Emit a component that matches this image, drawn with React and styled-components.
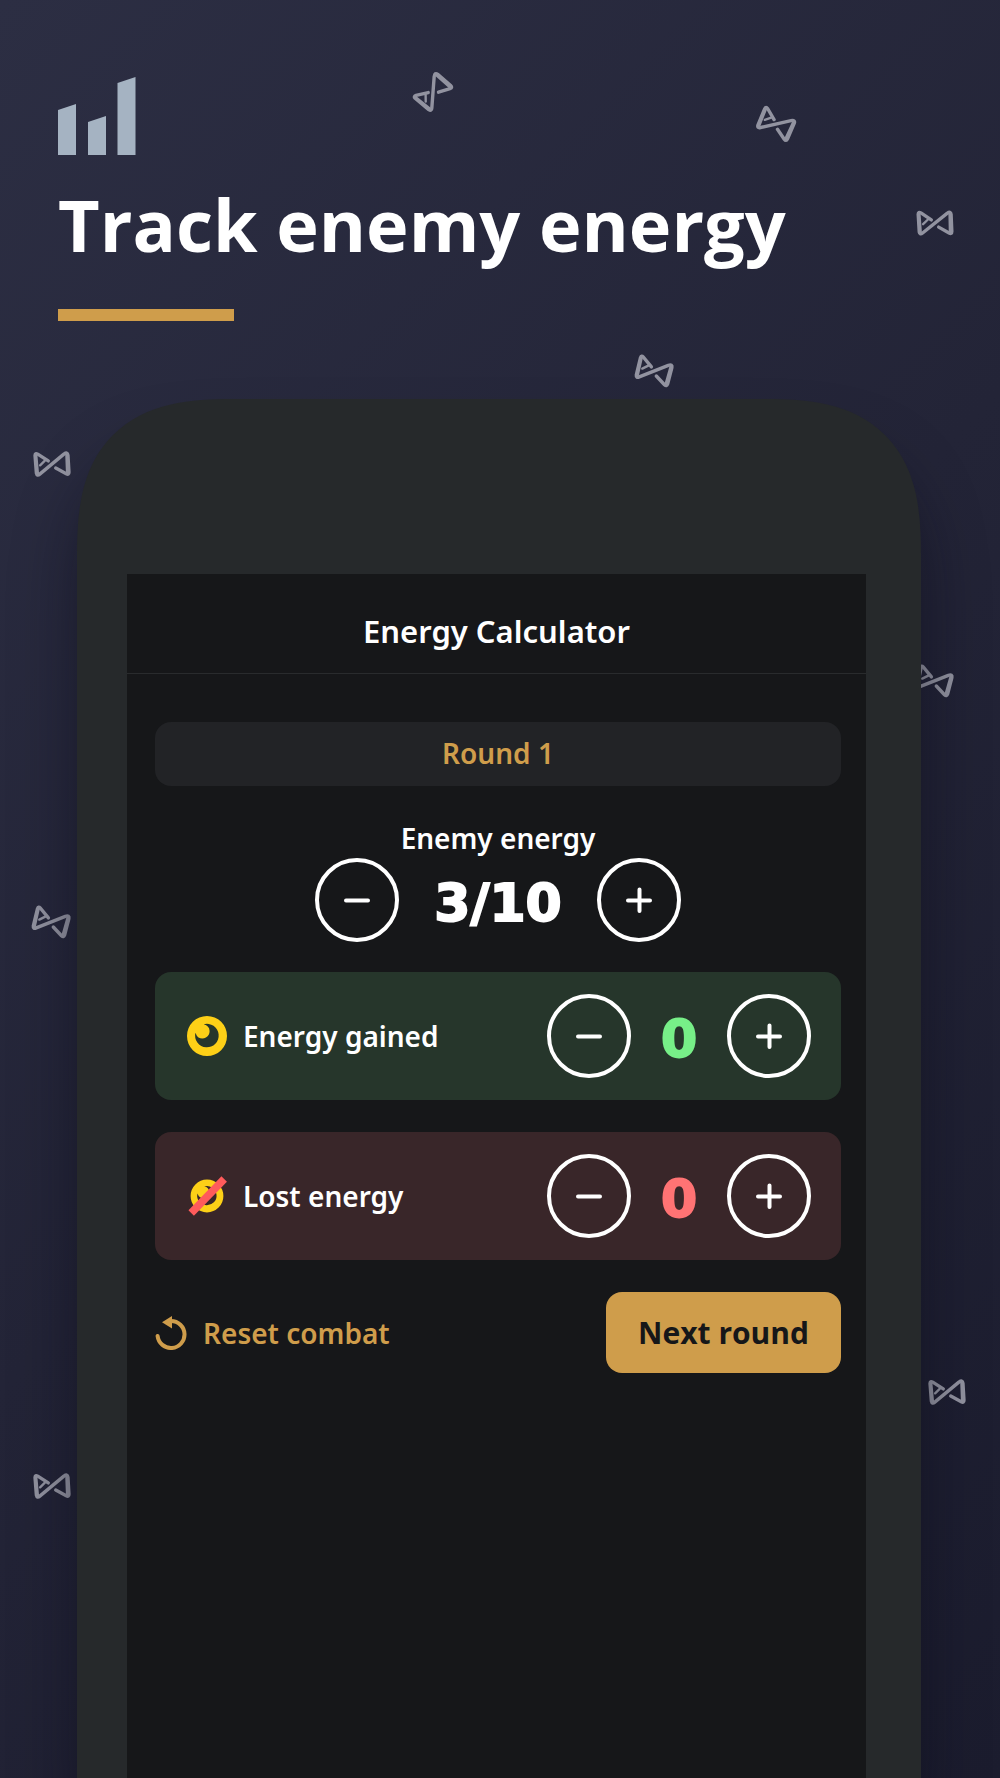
import { useState } from 'react'
import styled, { createGlobalStyle } from 'styled-components'

const GlobalStyle = createGlobalStyle`
  * {
    box-sizing: border-box;
  }

  body {
    margin: 0;
    background-color: #232438;
  }

  button {
    margin: 0;
    padding: 0;
    border: none;
    background: none;
    cursor: pointer;
  }
`

const Page = styled.div`
  position: relative;
  display: flex;
  flex-direction: column;
  min-height: 100vh;
  overflow: hidden;
  color: white;
  font-family: 'Open Sans', sans-serif;
  background: linear-gradient(135deg, #2c2e43 0%, #232437 50%, #1b1c2e 100%);
`

const Intro = styled.header`
  position: relative;
  display: flex;
  flex-direction: column;
  align-items: flex-start;
  padding: 77px 58px 78px;
`

const Title = styled.h1`
  margin: 20px 0 36px;
  font-size: 72px;
  line-height: 98px;
  font-weight: 700;
`

const Underline = styled.div`
  width: 176px;
  height: 12px;
  background-color: #cf9d4b;
`

const Mark = styled.svg`
  position: absolute;
  left: ${(props) => props.$left}%;
  top: ${(props) => props.$top}px;
  width: 38px;
  height: 28px;
  transform: rotate(${(props) => props.$turn}deg);
  overflow: visible;
  fill: none;
  stroke: #9293a0;
  stroke-linecap: round;
  stroke-linejoin: round;
`

const Phone = styled.main`
  position: relative;
  display: flex;
  flex: 1;
  margin: 0 79px 0 77px;
  padding: 175px 55px 0 50px;
  border-radius: 134px 134px 0 0;
  background-color: #26292b;
  box-shadow: 0 50px 60px rgba(10, 10, 24, 0.5);

  @supports (corner-shape: superellipse(1.4)) {
    border-radius: 156px 156px 0 0;
    corner-shape: superellipse(1.4);
  }
`

const Screen = styled.section`
  flex: 1;
  min-width: 0;
  font-family: 'Noto Sans', sans-serif;
  font-size: 28px;
  font-weight: 600;
  background-color: #161719;
`

const ScreenTitle = styled.h2`
  margin: 0;
  padding: 37px 0 22px;
  border-bottom: 1px solid #292b2d;
  font-size: 31px;
  line-height: 40px;
  font-weight: 600;
  text-align: center;
`

const Content = styled.div`
  padding: 48px 25px 48px 28px;
`

const Round = styled.div`
  margin-bottom: 32px;
  padding: 11px 12px 13px;
  border-radius: 16px;
  line-height: 40px;
  text-align: center;
  color: #cf9d4b;
  background-color: #222326;
`

const Meter = styled.div`
  display: flex;
  flex-direction: column;
  align-items: center;
  margin-bottom: 30px;
  line-height: 40px;
`

const Row = styled.div`
  display: flex;
  align-items: center;
  gap: 16px;
  margin-bottom: 32px;
  padding: 22px 30px 22px 32px;
  border-radius: 16px;
  line-height: 40px;
  background-color: ${(props) => props.$background};
`

const Label = styled.span`
  flex: 1;
`

const Controls = styled.div`
  display: flex;
  align-items: center;
`

const CircleButton = styled.button`
  display: flex;
  align-items: center;
  justify-content: center;
  width: 84px;
  height: 84px;
  border: 4px solid white;
  border-radius: 50%;
  color: white;
`

const Value = styled.output`
  width: ${(props) => props.$width}px;
  padding-top: 6px;
  font-family: 'DejaVu Sans', sans-serif;
  font-size: 52px;
  line-height: 78px;
  font-weight: 700;
  text-align: center;
  color: ${(props) => props.$color || 'white'};
  -webkit-text-stroke: 2px currentColor;
`

const Actions = styled.div`
  display: flex;
  align-items: center;
  justify-content: space-between;
`

const ResetButton = styled.button`
  display: flex;
  align-items: center;
  gap: 16px;
  font: inherit;
  line-height: 40px;
  color: #cf9d4b;
`

const NextButton = styled.button`
  padding: 20px 32px;
  border-radius: 16px;
  font-family: 'Open Sans', sans-serif;
  font-size: 30px;
  line-height: 41px;
  font-weight: 700;
  color: #161719;
  background-color: #cf9d4b;
`

const MARKS = [
  { left: 41.4, top: 78, turn: -46 },
  { left: 75.7, top: 110, turn: 27 },
  { left: 91.6, top: 209, turn: 1 },
  { left: 63.5, top: 357, turn: 18 },
  { left: 3.3, top: 450, turn: 0 },
  { left: 91.5, top: 667, turn: 18 },
  { left: 3.2, top: 908, turn: 18 },
  { left: 92.8, top: 1378, turn: 0 },
  { left: 3.3, top: 1472, turn: 0 },
]

function BackgroundMark({ left, top, turn }) {
  return (
    <Mark
      viewBox='0 0 112 82'
      $left={left}
      $top={top}
      $turn={turn}
      aria-hidden='true'
    >
      <path
        strokeWidth='10'
        d='M45 32 L14 12 Q6 8 6 16 L10 68 Q12 78 20 71 L91 12 Q102 4 103 15 L106 65 Q106 74 98 70 L67 53'
      />
      <path strokeWidth='8' d='M9 15 L14 70 M99 14 L101 67' />
      <path strokeWidth='7' d='M21 45 L35 31' />
    </Mark>
  )
}

function Logo() {
  return (
    <svg width='78' height='78' viewBox='0 0 78 78' fill='#a5b3c2' aria-hidden='true'>
      <path d='M0 33 L18 27 V78 H0 Z' />
      <path d='M30 45 L48 39 V78 H30 Z' />
      <path d='M59.5 6 L77.5 0 V78 H59.5 Z' />
    </svg>
  )
}

function EnergyShape() {
  return (
    <path
      fill='#fdd017'
      fillRule='evenodd'
      d='M20 0 A20 20 0 1 1 20 40 A20 20 0 1 1 20 0 Z M16.7 8.2 A11.8 11.8 0 1 1 8.4 16.8 Q9.5 20 11.5 21.4 A7.3 7.3 0 0 0 22.6 15 Q22.4 9.6 16.7 8.2 Z'
    />
  )
}

function EnergyIcon() {
  return (
    <svg width='40' height='40' viewBox='0 0 40 40' aria-hidden='true'>
      <EnergyShape />
    </svg>
  )
}

function LostEnergyIcon() {
  return (
    <svg width='40' height='40' viewBox='0 0 40 40' aria-hidden='true'>
      <g transform='translate(3.6 3.6) scale(0.82)'>
        <EnergyShape />
      </g>
      <path d='M4.2 37 L37.2 3' stroke='#ff5b5b' strokeWidth='7.6' />
    </svg>
  )
}

function ResetIcon() {
  return (
    <svg width='32' height='34' viewBox='0 0 32 34' aria-hidden='true'>
      <path
        d='M2.6 20 A13.5 13.5 0 1 0 16 5'
        fill='none'
        stroke='currentColor'
        strokeWidth='4'
        strokeLinecap='round'
      />
      <path d='M7 6.3 L17 0 V12.6 Z' fill='currentColor' />
    </svg>
  )
}

function Sign({ plus }) {
  return (
    <svg
      width='26'
      height='26'
      viewBox='0 0 26 26'
      stroke='currentColor'
      strokeWidth='4'
      strokeLinecap='round'
      aria-hidden='true'
    >
      <path d={plus ? 'M2 13.5 H24 M13.5 2.5 V24' : 'M2 13.5 H24'} />
    </svg>
  )
}

function Stepper({ name, value, text, width, color, onChange }) {
  return (
    <Controls>
      <CircleButton
        type='button'
        aria-label={`Decrease ${name}`}
        onClick={() => onChange(Math.max(0, value - 1))}
      >
        <Sign />
      </CircleButton>
      <Value $width={width} $color={color}>
        {text || value}
      </Value>
      <CircleButton
        type='button'
        aria-label={`Increase ${name}`}
        onClick={() => onChange(Math.min(10, value + 1))}
      >
        <Sign plus />
      </CircleButton>
    </Controls>
  )
}

function App() {
  const [round, setRound] = useState(1)
  const [energy, setEnergy] = useState(3)
  const [gained, setGained] = useState(0)
  const [lost, setLost] = useState(0)

  const handleReset = () => {
    setRound(1)
    setEnergy(3)
    setGained(0)
    setLost(0)
  }

  // Every round the enemy gets 2 energy on top of what was gained or lost
  const handleNextRound = () => {
    setRound(round + 1)
    setEnergy(Math.min(10, Math.max(0, energy + gained - lost) + 2))
    setGained(0)
    setLost(0)
  }

  return (
    <Page>
      <GlobalStyle />
      {MARKS.map((mark, index) => (
        <BackgroundMark key={index} {...mark} />
      ))}

      <Intro>
        <Logo />
        <Title>Track enemy energy</Title>
        <Underline />
      </Intro>

      <Phone>
        <Screen>
          <ScreenTitle>Energy Calculator</ScreenTitle>
          <Content>
            <Round>Round {round}</Round>

            <Meter>
              <span>Enemy energy</span>
              <Stepper
                name='enemy energy'
                value={energy}
                text={`${energy}/10`}
                width={198}
                onChange={setEnergy}
              />
            </Meter>

            <Row $background='#26362b'>
              <EnergyIcon />
              <Label>Energy gained</Label>
              <Stepper
                name='energy gained'
                value={gained}
                width={96}
                color='#77ef88'
                onChange={setGained}
              />
            </Row>

            <Row $background='#392629'>
              <LostEnergyIcon />
              <Label>Lost energy</Label>
              <Stepper
                name='lost energy'
                value={lost}
                width={96}
                color='#ff7374'
                onChange={setLost}
              />
            </Row>

            <Actions>
              <ResetButton type='button' onClick={handleReset}>
                <ResetIcon />
                Reset combat
              </ResetButton>
              <NextButton type='button' onClick={handleNextRound}>
                Next round
              </NextButton>
            </Actions>
          </Content>
        </Screen>
      </Phone>
    </Page>
  )
}

export default App
